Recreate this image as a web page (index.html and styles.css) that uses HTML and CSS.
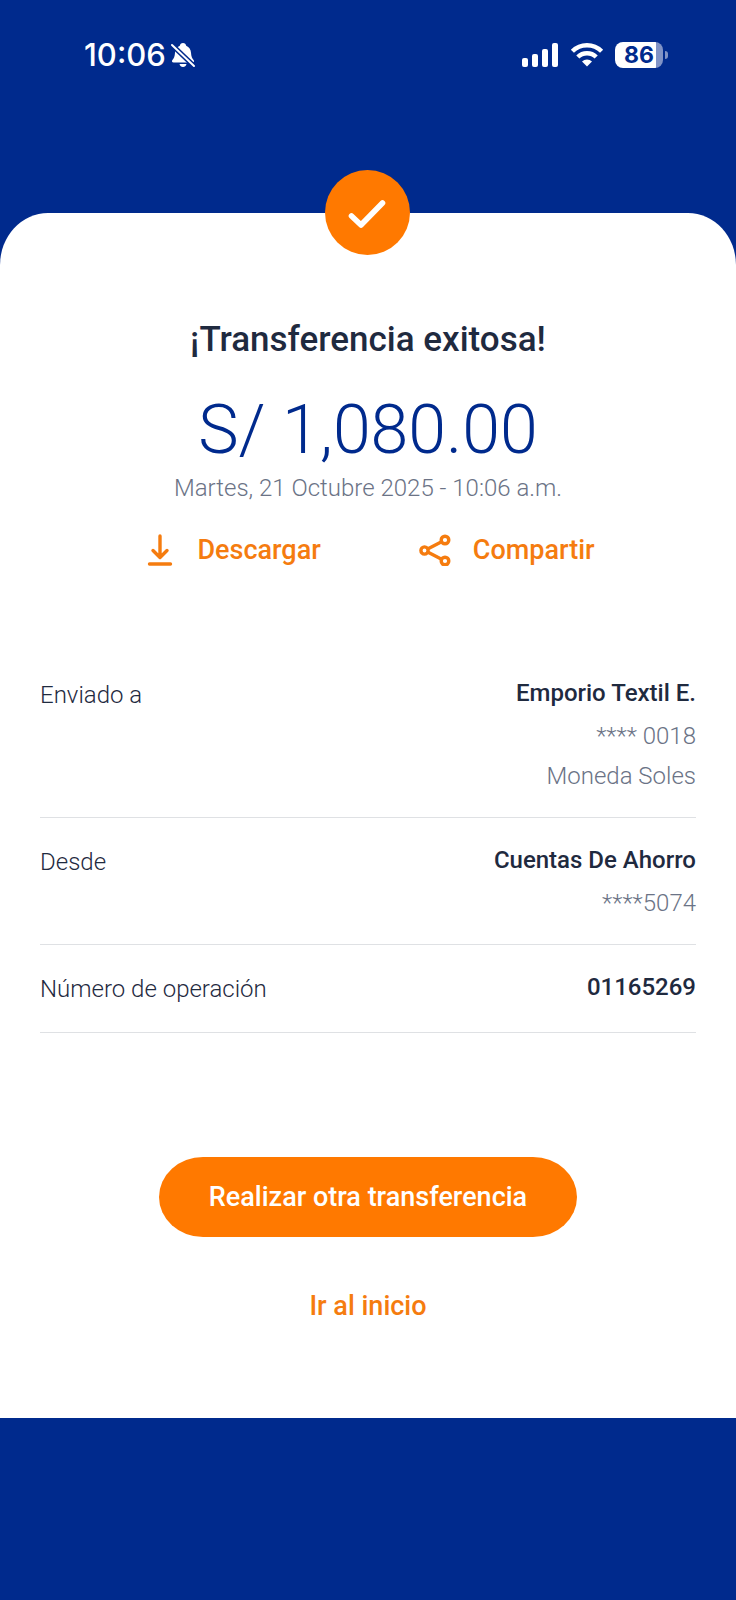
FILE: index.html
```html
<!DOCTYPE html>
<html lang="es">
<head>
<meta charset="utf-8">
<meta name="viewport" content="width=device-width, initial-scale=1">
<title>Transferencia exitosa</title>
<link rel="stylesheet" href="styles.css">
</head>
<body>
<header class="status">
  <div class="status-left">
    <span class="time">10:06</span>
    <svg class="bell" width="26" height="26" viewBox="0 0 26 26" aria-hidden="true">
      <path fill="#fff" d="M13 1c1.800 0 3 1.200 3.200 2.700 3 1.200 4.600 3.800 4.800 7 .2 4 1.200 5.600 2.600 7.200.8 1 .4 2.600-1.200 2.600H3.600c-1.600 0-2-1.600-1.200-2.600C3.800 16.300 4.800 14.700 5 10.700c.2-3.200 1.800-5.800 4.800-7C10 2.200 11.200 1 13 1zM9.500 22h7c-.4 2-1.800 3-3.500 3s-3.100-1-3.500-3z"/>
      <path stroke="#002a8d" stroke-width="5" d="M1 2l24 23"/>
      <path stroke="#fff" stroke-width="2" stroke-linecap="round" d="M2 3l22 21"/>
    </svg>
  </div>
  <div class="status-right">
    <svg width="38" height="26" viewBox="0 0 38 26" fill="#fff" aria-hidden="true">
      <rect x="1" y="16" width="6" height="9" rx="2"/>
      <rect x="11" y="12" width="6" height="13" rx="2"/>
      <rect x="21" y="7" width="6" height="18" rx="2"/>
      <rect x="31" y="1" width="6" height="24" rx="2"/>
    </svg>
    <svg width="34" height="26" viewBox="0 0 34 26" aria-hidden="true">
      <g fill="none" stroke="#fff" stroke-width="4.400">
        <path d="M2.400 9.300a20.600 20.600 0 0 1 29.200 0"/>
        <path d="M7.800 15a13 13 0 0 1 18.400 0"/>
      </g>
      <path fill="#fff" d="M17 24.500l-5-5a7.200 7.200 0 0 1 10 0z"/>
    </svg>
    <div class="battery"><span class="level">86</span></div>
  </div>
</header>

<main class="card">
  <svg class="badge" width="86" height="86" viewBox="0 0 86 86" role="img" aria-label="Completado">
    <circle cx="42.500" cy="42.500" r="42.500" fill="#ff7900"/>
    <path d="M26.500 46L36 55 57.500 33" fill="none" stroke="#fff" stroke-width="5.600" stroke-linecap="round" stroke-linejoin="round"/>
  </svg>
  <h1 class="title">¡Transferencia exitosa!</h1>
  <p class="amount">S/ 1,080.00</p>
  <p class="date">Martes, 21 Octubre 2025 - 10:06 a.m.</p>

  <div class="actions">
    <button class="action" type="button">
      <svg width="32" height="32" viewBox="0 0 32 32" fill="none" stroke="#f57c0f" stroke-width="3.400" stroke-linecap="round" stroke-linejoin="round" aria-hidden="true">
        <path d="M17 2v21M10 16.500l7 7 7-7M6.500 30h21"/>
      </svg>
      Descargar
    </button>
    <button class="action" type="button">
      <svg width="32" height="32" viewBox="0 0 32 32" fill="none" stroke="#f57c0f" stroke-width="3.400" aria-hidden="true">
        <circle cx="5.500" cy="16.500" r="3.600"/>
        <circle cx="26" cy="6" r="3.800"/>
        <circle cx="26" cy="27" r="3.800"/>
        <path d="M8.600 15L22.600 7.800M8.600 18L22.600 25.200"/>
      </svg>
      Compartir
    </button>
  </div>

  <dl class="details">
    <div class="row">
      <dt>Enviado a</dt>
      <dd><strong>Emporio Textil E.</strong><span>**** 0018</span><span>Moneda Soles</span></dd>
    </div>
    <div class="row">
      <dt>Desde</dt>
      <dd><strong>Cuentas De Ahorro</strong><span>****5074</span></dd>
    </div>
    <div class="row">
      <dt>Número de operación</dt>
      <dd><strong>01165269</strong></dd>
    </div>
  </dl>

  <button class="primary" type="button">Realizar otra transferencia</button>
  <a class="home" href="#">Ir al inicio</a>
</main>
</body>
</html>
```
FILE: styles.css
```css
* {
  box-sizing: border-box;
}

body {
  margin: 0;
  min-height: 100vh;
  background: #002a8d;
  color: #1f2a3f;
  font-family: Roboto, "Open Sans", sans-serif;
  font-size: 24px;
}

.status {
  display: flex;
  justify-content: space-between;
  align-items: center;
  height: 110px;
  padding: 0 68px 0 84px;
  color: #fff;
  font-family: Inter, sans-serif;
}

.status-left,
.status-right {
  display: flex;
  align-items: center;
}

.status-left {
  gap: 4px;
}

.status-right {
  gap: 11px;
}

.time {
  font-size: 31px;
  font-weight: 500;
  line-height: 40px;
}

.battery {
  display: flex;
  align-items: center;
  gap: 2px;
}

.battery::after {
  content: "";
  width: 3px;
  height: 8px;
  border-radius: 0 4px 4px 0;
  background: #8093c6;
}

.level {
  width: 48px;
  height: 26px;
  border-radius: 8px;
  background: linear-gradient(90deg, #fff 85%, #8093c6 85%);
  color: #002a8d;
  font-size: 23px;
  font-weight: 700;
  line-height: 26px;
  text-align: center;
}

.card {
  display: flex;
  flex-direction: column;
  align-items: center;
  margin-top: 103px;
  padding: 0 40px 96px;
  border-radius: 48px 48px 0 0 / 52px 52px 0 0;
  background: #fff;
}

.badge {
  margin-top: -43px;
}

.title {
  margin: 64px 0 0;
  font-size: 35px;
  font-weight: 500;
  line-height: 40px;
}

.amount {
  margin: 34px 0 0;
  color: #002a8d;
  font-size: 68px;
  font-weight: 300;
  line-height: 72px;
}

.date {
  margin: 6px 0 0;
  color: #6b7386;
  font-weight: 300;
  line-height: 32px;
}

.actions {
  display: flex;
  gap: 98px;
  margin-top: 26px;
  padding-left: 2px;
}

.action {
  display: flex;
  align-items: center;
  gap: 22px;
  padding: 4px 0;
  border: 0;
  background: none;
  color: #f57c0f;
  font: 500 27px/32px Roboto, sans-serif;
}

.details {
  width: 100%;
  margin: 81px 0 0;
}

.row {
  display: flex;
  justify-content: space-between;
  padding: 22px 0 21px;
  border-bottom: 1px solid #dfe1e4;
}

dt {
  font-weight: 300;
  line-height: 44px;
}

dd {
  display: flex;
  flex-direction: column;
  margin: 0;
  color: #6b7386;
  font-weight: 300;
  line-height: 40px;
  text-align: right;
}

dd strong {
  margin-bottom: 3px;
  color: #1f2a3f;
  font-weight: 500;
}

.primary {
  margin-top: 124px;
  padding: 24px 50px;
  border: 0;
  border-radius: 44px / 40px;
  background: #ff7900;
  color: #fff;
  font: 500 27px/32px Roboto, sans-serif;
}

.home {
  margin-top: 53px;
  color: #f57c0f;
  font-size: 27px;
  font-weight: 500;
  line-height: 32px;
  text-decoration: none;
}
```
